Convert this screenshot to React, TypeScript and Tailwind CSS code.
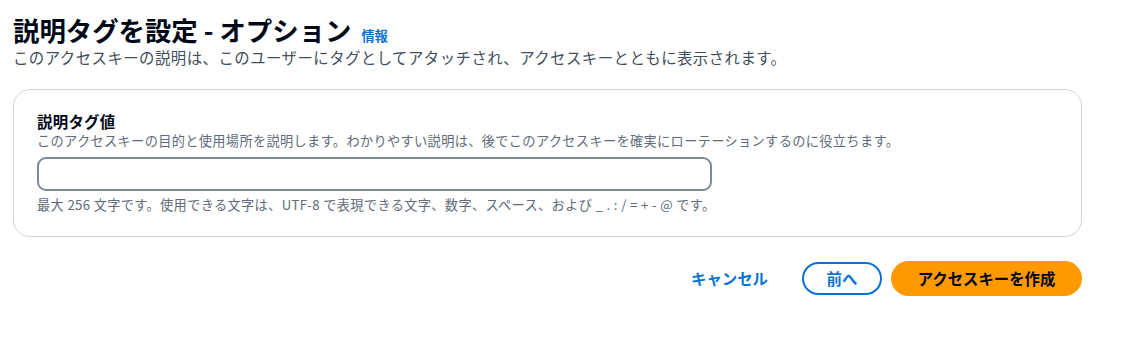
export default function App() {
  const font = { fontFamily: '"Noto Sans CJK JP", "Noto Sans", sans-serif' };

  return (
    <div className="bg-white w-[1125px] h-[356px] text-[#000716]" style={font}>
      <div className="ml-[13px] w-[1069px] pt-[12px]">
        {/* Header */}
        <div className="flex items-baseline">
          <h1 className="text-[26.4px] leading-[35px] font-bold">説明タグを設定 - オプション</h1>
          <a className="ml-[10px] text-[13.2px] font-bold text-[#0972d3]">情報</a>
        </div>
        <p className="text-[15.4px] leading-[20px] tracking-[0.47px] text-[#414d5c]">
          このアクセスキーの説明は、このユーザーにタグとしてアタッチされ、アクセスキーとともに表示されます。
        </p>

        {/* Card */}
        <div className="mt-[22px] border border-[#d1d5db] rounded-[17px] pt-[21px] pb-[22px] px-[23px]">
          <label className="block text-[15.4px] leading-[20px] font-bold tracking-[0.3px]">説明タグ値</label>
          <p className="text-[13.2px] leading-[19px] tracking-[0.35px] text-[#5f6b7a]">
            このアクセスキーの目的と使用場所を説明します。わかりやすい説明は、後でこのアクセスキーを確実にローテーションするのに役立ちます。
          </p>
          <input
            type="text"
            className="mt-[7px] block w-[675px] h-[34px] border-2 border-[#7d8998] rounded-[9px] px-3 outline-none"
          />
          <p className="mt-[5px] text-[13.2px] leading-[18px] tracking-[0.35px] text-[#5f6b7a]">
            最大 256 文字です。使用できる文字は、UTF-8 で表現できる文字、数字、スペース、および _ . : / = + - @ です。
          </p>
        </div>

        {/* Actions */}
        <div className="mt-[24px] flex justify-end items-center">
          <button className="px-[20px] h-[34px] text-[15.4px] font-bold text-[#0972d3]">キャンセル</button>
          <button className="ml-[14px] w-[80px] h-[33px] rounded-full border-2 border-[#0972d3] text-[15.4px] font-bold text-[#0972d3]">
            前へ
          </button>
          <button className="ml-[9px] w-[191px] h-[35px] rounded-full bg-[#ff9900] text-[15.4px] font-bold text-[#000716]">
            アクセスキーを作成
          </button>
        </div>
      </div>
    </div>
  );
}
